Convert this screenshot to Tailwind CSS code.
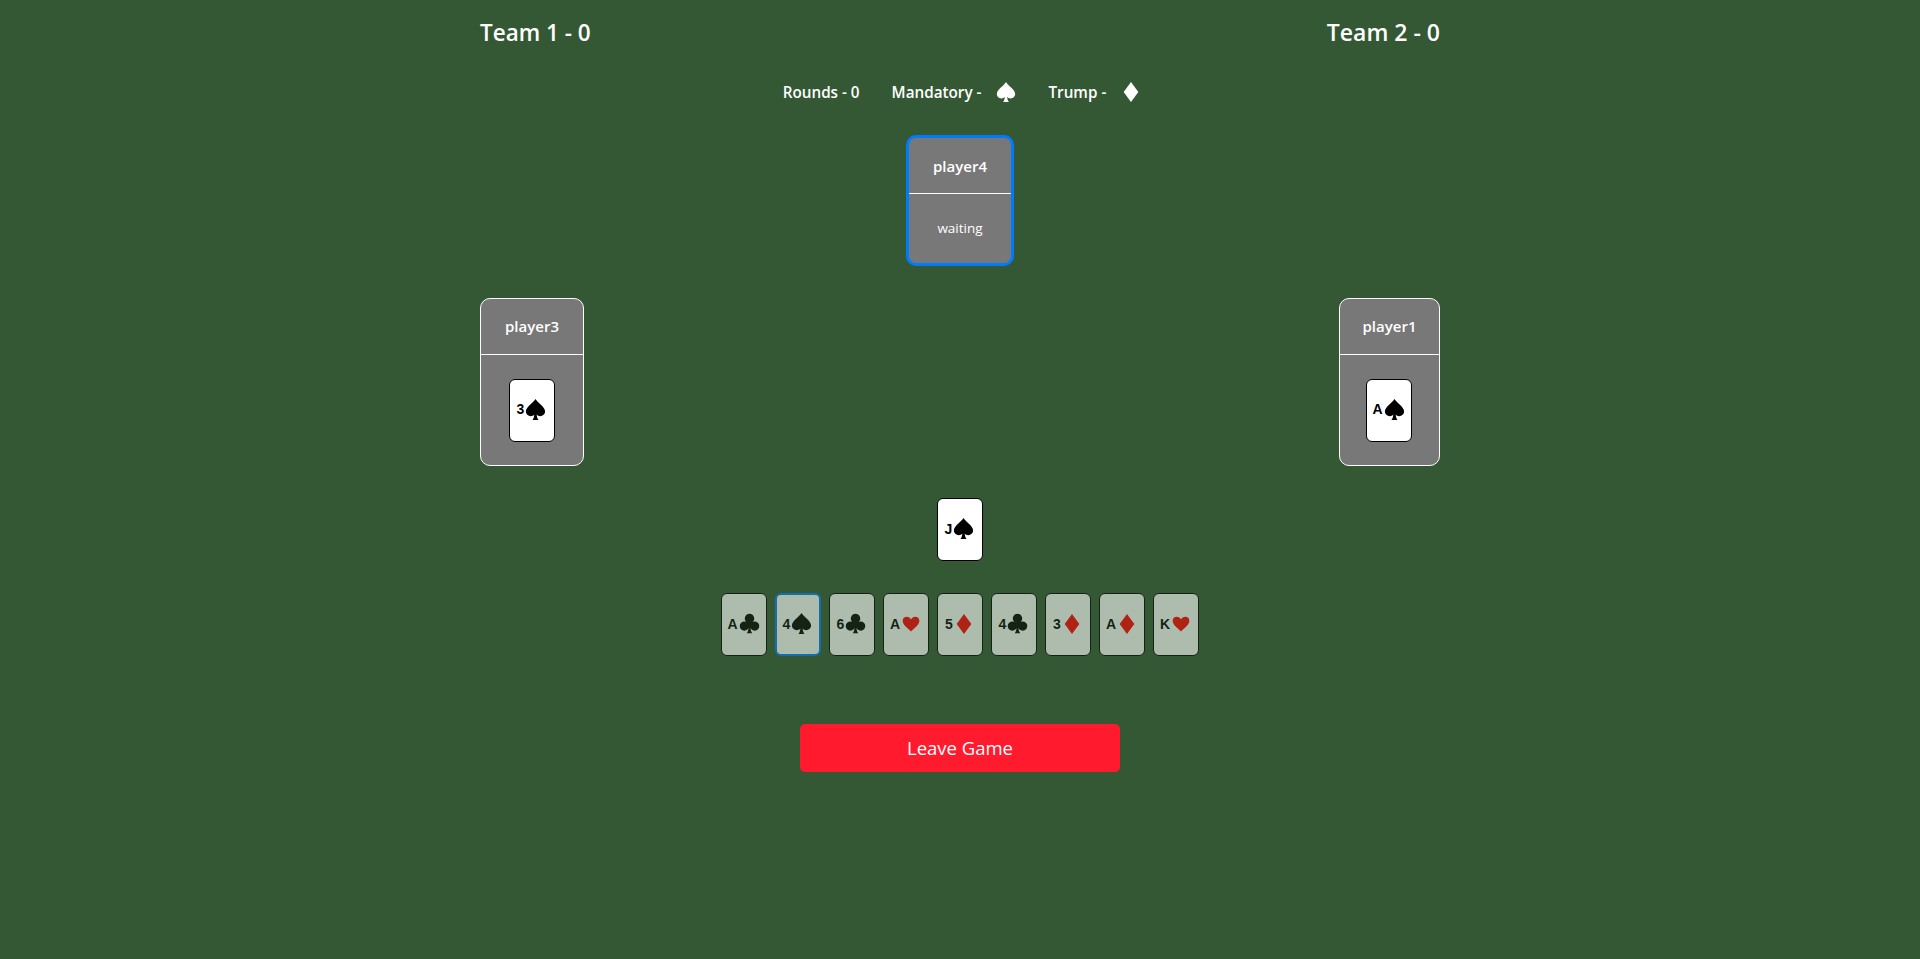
<!DOCTYPE html>
<html lang="en">
<head>
    <meta charset="UTF-8">
    <meta name="viewport" content="width=device-width, initial-scale=1.0">
    <title>Game</title>
    <script src="https://cdn.jsdelivr.net/npm/@tailwindcss/browser@4"></script>
</head>
<body class="bg-[#345834] font-['Open_Sans',sans-serif] text-white">
    <!-- suit shapes -->
    <svg class="hidden">
        <symbol id="spade" viewBox="0 0 24 24"><path d="M12 1C9.500 5.500 2 9 2 14.200C2 17 4.500 19 7 19C8.600 19 10 18.300 10.800 17.200C10.600 19.500 10 21.500 8.800 23H15.200C14 21.500 13.400 19.500 13.200 17.200C14 18.300 15.400 19 17 19C19.500 19 22 17 22 14.200C22 9 14.500 5.500 12 1Z"/></symbol>
        <symbol id="club" viewBox="-1 -1 26 26"><path d="M12 1A5.300 5.300 0 0 0 8.300 10.100A5.200 5.200 0 1 0 10.900 17C10.700 19.500 10 21.500 8.800 23H15.200C14 21.500 13.300 19.500 13.100 17A5.200 5.200 0 1 0 15.700 10.100A5.300 5.300 0 0 0 12 1Z"/></symbol>
        <symbol id="heart" viewBox="-2.500 -2.500 29 29"><path d="M12 22C8 17.500 1 13.500 1 7.800C1 4.500 3.500 2.500 6.300 2.500C8.800 2.500 10.800 3.800 12 6C13.200 3.800 15.200 2.500 17.700 2.500C20.500 2.500 23 4.500 23 7.800C23 13.500 16 17.500 12 22Z"/></symbol>
        <symbol id="diamond" viewBox="0 0 24 24"><path d="M12 1L20 12L12 23L4 12Z"/></symbol>
    </svg>

    <div class="mx-auto w-[960px]">
        <!-- Scores -->
        <header class="flex h-[66px] items-center justify-between pb-px text-[22.500px] font-semibold">
            <h2>Team 1 - 0</h2>
            <h2 class="text-[23px]">Team 2 - 0</h2>
        </header>

        <!-- Round info -->
        <div class="mt-[14px] flex h-[24px] items-center justify-center pl-[5px] text-[15.250px] font-semibold">
            <span class="mr-8">Rounds - 0</span>
            <span class="mr-[14px]">Mandatory -</span>
            <svg class="mr-[31px] h-[22px] w-[22px] fill-white"><use href="#spade"/></svg>
            <span class="mr-[14px]">Trump -</span>
            <svg class="h-[22px] w-[22px] fill-white"><use href="#diamond"/></svg>
        </div>

        <!-- Top player -->
        <div class="mt-[31px] flex justify-center">
            <div class="flex h-[131px] w-[108px] flex-col rounded-[10px] border-[3px] border-[#007bff] bg-[#787878]">
                <div class="flex h-[56px] items-center justify-center border-b border-white pt-px text-[15px] font-semibold">player4</div>
                <div class="flex flex-1 items-center justify-center text-[13.500px]">waiting</div>
            </div>
        </div>

        <!-- Side players -->
        <div class="mt-[32px] flex justify-between">
            <div class="flex h-[168px] w-[104px] flex-col rounded-[10px] border border-white bg-[#787878]">
                <div class="flex h-[56px] items-center justify-center border-b border-white text-[15px] font-semibold">player3</div>
                <div class="flex flex-1 items-center justify-center">
                    <div class="flex h-[63px] w-[46px] items-center justify-center rounded-[6px] border border-black bg-white pb-[2px] font-['Liberation_Sans',sans-serif] text-sm font-bold text-black">3<svg class="h-[23px] w-[23px] fill-black"><use href="#spade"/></svg></div>
                </div>
            </div>
            <div class="flex h-[168px] w-[101px] flex-col rounded-[10px] border border-white bg-[#787878]">
                <div class="flex h-[56px] items-center justify-center border-b border-white text-[15px] font-semibold">player1</div>
                <div class="flex flex-1 items-center justify-center pr-px">
                    <div class="flex h-[63px] w-[46px] items-center justify-center rounded-[6px] border border-black bg-white pb-[2px] font-['Liberation_Sans',sans-serif] text-sm font-bold text-black">A<svg class="h-[23px] w-[23px] fill-black"><use href="#spade"/></svg></div>
                </div>
            </div>
        </div>

        <!-- Own played card -->
        <div class="mt-[32px] flex justify-center">
            <div class="flex h-[63px] w-[46px] items-center justify-center rounded-[6px] border border-black bg-white pb-[2px] font-['Liberation_Sans',sans-serif] text-sm font-bold text-black">J<svg class="h-[23px] w-[23px] fill-black"><use href="#spade"/></svg></div>
        </div>

        <!-- Hand -->
        <div class="mt-[32px] flex justify-center gap-2 font-['Liberation_Sans',sans-serif] text-sm font-bold text-black">
            <div class="flex h-[63px] w-[46px] items-center justify-center rounded-[6px] border border-black bg-white pb-[2px] opacity-60">A<svg class="h-[23px] w-[23px] fill-black"><use href="#club"/></svg></div>
            <div class="flex h-[63px] w-[46px] items-center justify-center rounded-[6px] border-2 border-[#007bff] bg-white pb-[2px] opacity-60">4<svg class="h-[23px] w-[23px] fill-black"><use href="#spade"/></svg></div>
            <div class="flex h-[63px] w-[46px] items-center justify-center rounded-[6px] border border-black bg-white pb-[2px] opacity-60">6<svg class="h-[23px] w-[23px] fill-black"><use href="#club"/></svg></div>
            <div class="flex h-[63px] w-[46px] items-center justify-center rounded-[6px] border border-black bg-white pb-[2px] opacity-60">A<svg class="h-[22px] w-[22px] fill-[#ff0000]"><use href="#heart"/></svg></div>
            <div class="flex h-[63px] w-[46px] items-center justify-center rounded-[6px] border border-black bg-white pb-[2px] opacity-60">5<svg class="h-[22px] w-[22px] fill-[#ff0000]"><use href="#diamond"/></svg></div>
            <div class="flex h-[63px] w-[46px] items-center justify-center rounded-[6px] border border-black bg-white pb-[2px] opacity-60">4<svg class="h-[23px] w-[23px] fill-black"><use href="#club"/></svg></div>
            <div class="flex h-[63px] w-[46px] items-center justify-center rounded-[6px] border border-black bg-white pb-[2px] opacity-60">3<svg class="h-[22px] w-[22px] fill-[#ff0000]"><use href="#diamond"/></svg></div>
            <div class="flex h-[63px] w-[46px] items-center justify-center rounded-[6px] border border-black bg-white pb-[2px] opacity-60">A<svg class="h-[22px] w-[22px] fill-[#ff0000]"><use href="#diamond"/></svg></div>
            <div class="flex h-[63px] w-[46px] items-center justify-center rounded-[6px] border border-black bg-white pb-[2px] opacity-60">K<svg class="h-[22px] w-[22px] fill-[#ff0000]"><use href="#heart"/></svg></div>
        </div>

        <!-- Leave -->
        <div class="mt-[68px] flex justify-center">
            <button class="h-[48px] w-[320px] rounded-[5px] bg-[#ff1a2e] text-[18.500px]">Leave Game</button>
        </div>
    </div>
</body>
</html>
